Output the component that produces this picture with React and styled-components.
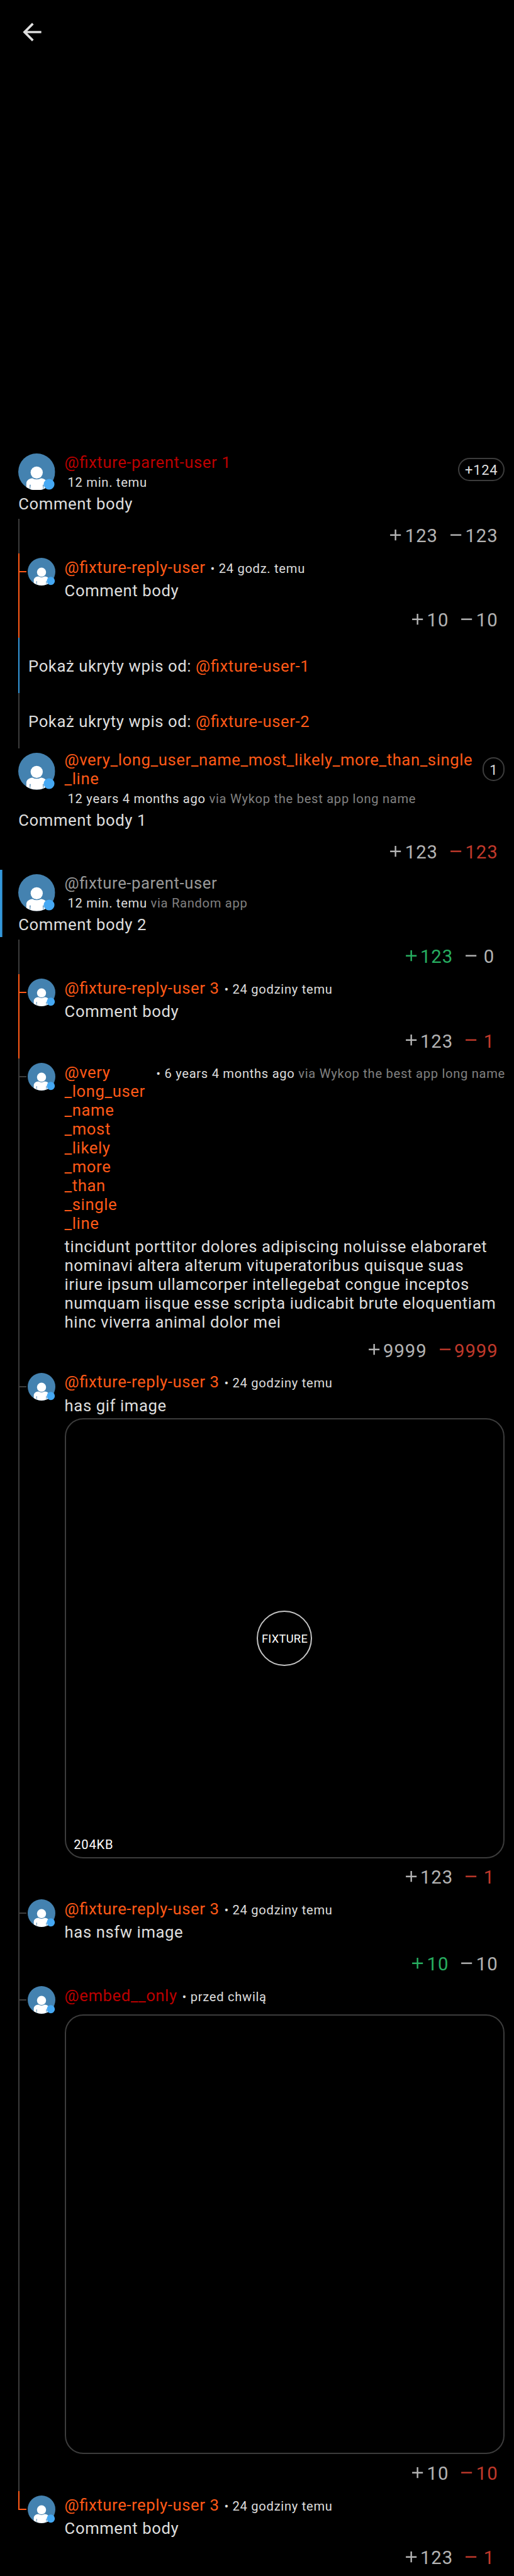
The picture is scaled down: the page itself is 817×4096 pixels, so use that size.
import React from "react";
import styled, { createGlobalStyle } from "styled-components";

const u = (n) => `${((n * 817) / 1560).toFixed(3)}px`;

const color = {
  text: "#dedede",
  dim: "#808080",
  vote: "#b3b3b3",
  line: "#3c3c3c",
  orange: "#ff5917",
  red: "#bb0000",
  gray: "#999999",
  blue: "#3498db",
  plus: "#27ae60",
  minus: "#c0392b",
};

const GlobalStyle = createGlobalStyle`
  html, body { margin: 0; background: #000; }
  body { overflow: hidden; }
`;

const Screen = styled.main`
  width: 817px;
  height: 4096px;
  overflow: hidden;
  background: #000;
  color: ${color.text};
  font-family: Roboto, "Liberation Sans", sans-serif;
  font-size: ${u(49)};
  line-height: ${u(57.2)};
  letter-spacing: 0.0231em;
  font-feature-settings: "liga" 1;
`;

const Toolbar = styled.header`
  height: ${u(1362)};
  box-sizing: border-box;
  padding: ${u(56)};
`;

const BackIcon = styled.svg`
  display: block;
  width: ${u(84)};
  height: ${u(84)};
  fill: ${color.text};
`;

const AvatarSvg = styled.svg`
  display: block;
  flex: none;
  width: ${(p) => u(p.$size)};
  height: ${(p) => u(p.$size)};
  margin: ${u(14)} ${u(28)} 0 ${(p) => u(p.$inset)};
`;

const Name = styled.div`
  color: ${(p) => p.$color};
  white-space: nowrap;
  min-width: 0;
`;

const NameLine = styled.div``;

const Time = styled.div`
  flex: none;
  font-size: ${u(38.5)};
  line-height: ${u(48)};
  letter-spacing: 0.0347em;
  white-space: pre;
  margin: ${(p) => u(p.$gap || 0)} ${u(-1.3)} 0 ${(p) => u(p.$inset)};
`;

const Via = styled.span`
  color: ${color.dim};
`;

const Parent = styled.section`
  box-sizing: border-box;
  box-shadow: ${(p) => (p.$marked ? `inset ${u(7)} 0 ${color.blue}` : "none")};
  height: ${(p) => u(p.$tall ? 256 : 206)};
  margin-bottom: ${u(7)};
  padding: 0 ${u(28)} 0 ${u(56)};
`;

const ParentHeader = styled.div`
  display: flex;
  align-items: flex-start;
  height: ${(p) => u(p.$tall ? 191.1 : 141.1)};
`;

const ParentMeta = styled.div`
  flex: 1;
  padding-top: ${(p) => u(p.$tall ? 8.4 : 15.1)};
`;

const Badge = styled.div`
  flex: none;
  box-sizing: border-box;
  width: ${(p) => u(p.$wide ? 142 : 67)};
  height: ${u(71)};
  margin-top: ${u(28)};
  padding-top: ${u(2.4)};
  border: ${u(4)} solid ${color.line};
  border-radius: ${u(36)};
  font-size: ${u(42)};
  letter-spacing: 0.033em;
  line-height: ${u(63)};
  text-align: center;
`;

const Row = styled.div`
  display: flex;
  align-items: flex-start;
  padding-left: ${u(56)};
  height: ${(p) => u(p.$height)};
`;

const Rail = styled.div`
  flex: none;
  width: ${u(4)};
  align-self: ${(p) => (p.$last ? "flex-start" : "stretch")};
  height: ${(p) => (p.$last ? u(58) : "auto")};
  background: ${(p) => p.$color};
`;

const Tick = styled.div`
  flex: none;
  width: ${u(20)};
  height: ${u(4)};
  margin-top: ${u(54)};
  background: ${(p) => p.$color};
`;

const Content = styled.div`
  flex: 1;
  min-width: 0;
  padding: ${u(15.2)} ${u(28)} 0 0;
`;

const ReplyHeader = styled.div`
  display: flex;
  align-items: baseline;
  margin-bottom: ${u(13.9)};
`;

const LongName = styled(Name)`
  flex: 1;
`;

const Body = styled.div`
  white-space: nowrap;
`;

const Hidden = styled.div`
  padding-left: ${u(26)};
  line-height: ${u(175)};
`;

const Mention = styled.span`
  color: ${color.orange};
`;

const Votes = styled.div`
  flex: 1;
  display: flex;
  justify-content: flex-end;
  align-items: center;
  gap: ${u(27)};
  height: ${u(105)};
  margin-top: ${(p) => u(p.$gap)};
  padding-right: ${(p) => u(p.$right)};
`;

const VoteButton = styled.div`
  display: flex;
  align-items: center;
  color: ${(p) => p.$color};
  font-size: ${u(56)};
  letter-spacing: 0.03125em;
`;

const VoteIcon = styled.svg`
  width: ${u(56)};
  height: ${u(56)};
  margin-bottom: ${u(10)};
  fill: currentColor;
`;

const VoteCount = styled.span`
  min-width: ${u(53.6)};
  text-align: center;
`;

const Media = styled.div`
  box-sizing: border-box;
  display: grid;
  grid-template-rows: 1fr auto 1fr;
  height: ${u(1336)};
  margin-top: ${(p) => u(p.$gap)};
  border: 2px solid ${color.line};
  border-radius: ${u(56)};
  color: #fff;
`;

const Play = styled.div`
  grid-row: 2;
  justify-self: center;
  box-sizing: border-box;
  width: ${u(168)};
  height: ${u(168)};
  border: ${u(4)} solid #c4c4c4;
  border-radius: 50%;
  font-size: ${u(35)};
  line-height: ${u(164)};
  letter-spacing: 0.0148em;
  text-align: center;
`;

const Size = styled.div`
  grid-row: 3;
  align-self: end;
  padding: 0 0 ${u(11.5)} ${u(24)};
  font-size: ${u(38.5)};
  letter-spacing: 0.04em;
  line-height: ${u(48)};
`;

function Avatar({ size, inset = 0, id }) {
  return (
    <AvatarSvg viewBox="0 0 112 112" $size={size} $inset={inset}>
      <clipPath id={id}>
        <circle cx="56" cy="56" r="56" />
      </clipPath>
      <g clipPath={`url(#${id})`}>
        <rect width="112" height="112" fill="#4482b0" />
        <path
          d="M24.6 112V91C24.6 82 34 75.500 43 75.300Q49.500 79 56 79T69 75.300C78 75.500 87.400 82 87.400 91V112Z"
          fill="#fff"
        />
        <path d="M34.700 95h3l-1.400 14h-1.200zM74.300 95h3l-.4 14h-1.200z" fill="#4482b0" />
        <circle cx="56" cy="58" r="18.500" fill="#fff" />
      </g>
      <circle cx="93.600" cy="93.600" r="16.400" fill="#45a8f3" />
    </AvatarSvg>
  );
}

function VoteBar({ plus, minus, up, down, gap = 1.5, right = 48.6 }) {
  return (
    <Votes $gap={gap} $right={right}>
      <VoteButton $color={up ? color.plus : color.vote}>
        <VoteIcon viewBox="0 0 24 24">
          <path d="M19 13h-6v6h-2v-6H5v-2h6V5h2v6h6v2z" />
        </VoteIcon>
        <VoteCount>{plus}</VoteCount>
      </VoteButton>
      <VoteButton $color={down ? color.minus : color.vote}>
        <VoteIcon viewBox="0 0 24 24">
          <path d="M19 13H5v-2h14v2z" />
        </VoteIcon>
        <VoteCount>{minus}</VoteCount>
      </VoteButton>
    </Votes>
  );
}

function ParentComment({ id, name, nameColor, time, via, body, badge, marked }) {
  const tall = name.length > 1;
  return (
    <Parent $marked={marked} $tall={tall}>
      <ParentHeader $tall={tall}>
        <Avatar size={112} id={id} />
        <ParentMeta $tall={tall}>
          <Name $color={nameColor}>
            {name.map((line) => (
              <NameLine key={line}>{line}</NameLine>
            ))}
          </Name>
          <Time $inset={9.5} $gap={7.2}>
            {time}
            {via && <Via> via {via}</Via>}
          </Time>
        </ParentMeta>
        {badge && <Badge $wide={badge.length > 1}>{badge}</Badge>}
      </ParentHeader>
      <Body>{body}</Body>
    </Parent>
  );
}

function ParentVotes({ rail, ...votes }) {
  return (
    <Row $height={105}>
      <Rail $color={rail ? color.line : "transparent"} />
      <VoteBar {...votes} />
    </Row>
  );
}

function Reply({
  id,
  name,
  nameColor = color.orange,
  time,
  via,
  body = [],
  height,
  rail = color.line,
  last,
  media,
  mediaGap,
  voteGap = 9.4,
  votes,
}) {
  const NameBox = name.length > 1 ? LongName : Name;
  return (
    <Row $height={height}>
      <Rail $color={rail} $last={last} />
      <Tick $color={rail} />
      <Avatar size={84} inset={4} id={id} />
      <Content>
        <ReplyHeader>
          <NameBox $color={nameColor}>
            {name.map((line) => (
              <NameLine key={line}>{line}</NameLine>
            ))}
          </NameBox>
          <Time $inset={15}>
            • {time}
            {via && <Via> via {via}</Via>}
          </Time>
        </ReplyHeader>
        {body.map((line) => (
          <Body key={line}>{line}</Body>
        ))}
        {media && (
          <Media $gap={mediaGap}>
            {media.label && <Play>{media.label}</Play>}
            {media.size && <Size>{media.size}</Size>}
          </Media>
        )}
        <VoteBar {...votes} gap={voteGap} right={20.6} />
      </Content>
    </Row>
  );
}

function HiddenReply({ user, rail }) {
  return (
    <Row $height={168.25}>
      <Rail $color={rail} />
      <Hidden>
        Pokaż ukryty wpis od: <Mention>{user}</Mention>
      </Hidden>
    </Row>
  );
}

export default function App() {
  return (
    <Screen>
      <GlobalStyle />
      <Toolbar>
        <BackIcon viewBox="0 0 24 24">
          <path d="M20 11H7.830l5.590-5.590L12 4l-8 8 8 8 1.410-1.410L7.830 13H20v-2z" />
        </BackIcon>
      </Toolbar>

      <ParentComment id="p1" name={["@fixture-parent-user 1"]} nameColor={color.red} time="12 min. temu" body="Comment body" badge="+124" />
      <ParentVotes rail plus="123" minus="123" />
      <Reply
        id="r1"
        name={["@fixture-reply-user"]}
        time="24 godz. temu"
        body={["Comment body"]}
        rail={color.orange}
        height={255.5}
        votes={{ plus: "10", minus: "10" }}
      />
      <HiddenReply user="@fixture-user-1" rail={color.blue} />
      <HiddenReply user="@fixture-user-2" rail={color.line} />

      <ParentComment
        id="p2"
        name={["@very_long_user_name_most_likely_more_than_single", "_line"]}
        nameColor={color.orange}
        time="12 years 4 months ago"
        via="Wykop the best app long name"
        body="Comment body 1"
        badge="1"
      />
      <ParentVotes plus="123" minus="123" down />

      <ParentComment id="p3" name={["@fixture-parent-user"]} nameColor={color.gray} time="12 min. temu" via="Random app" body="Comment body 2" marked />
      <ParentVotes rail plus="123" minus="0" up />
      <Reply
        id="r2"
        name={["@fixture-reply-user 3"]}
        time="24 godziny temu"
        body={["Comment body"]}
        rail={color.orange}
        height={256}
        votes={{ plus: "123", minus: "1", down: true }}
      />
      <Reply
        id="r3"
        name={["@very", "_long_user", "_name", "_most", "_likely", "_more", "_than", "_single", "_line"]}
        time="6 years 4 months ago"
        via="Wykop the best app long name"
        body={[
          "tincidunt porttitor dolores adipiscing noluisse elaboraret",
          "nominavi altera alterum vituperatoribus quisque suas",
          "iriure ipsum ullamcorper intellegebat congue inceptos",
          "numquam iisque esse scripta iudicabit brute eloquentiam",
          "hinc viverra animal dolor mei",
        ]}
        voteGap={6.5}
        height={940}
        votes={{ plus: "9999", minus: "9999", down: true }}
      />
      <Reply
        id="r4"
        name={["@fixture-reply-user 3"]}
        time="24 godziny temu"
        body={["has gif image"]}
        media={{ label: "FIXTURE", size: "204KB" }}
        mediaGap={8.5}
        voteGap={7.7}
        height={1598.5}
        votes={{ plus: "123", minus: "1", down: true }}
      />
      <Reply
        id="r5"
        name={["@fixture-reply-user 3"]}
        time="24 godziny temu"
        body={["has nsfw image"]}
        voteGap={16.5}
        height={263.5}
        votes={{ plus: "10", minus: "10", up: true }}
      />
      <Reply
        id="r6"
        name={["@embed__only"]}
        nameColor={color.red}
        time="przed chwilą"
        media={{}}
        mediaGap={27.3}
        voteGap={8}
        height={1547}
        votes={{ plus: "10", minus: "10", down: true }}
      />
      <Reply
        id="r7"
        name={["@fixture-reply-user 3"]}
        time="24 godziny temu"
        body={["Comment body"]}
        rail={color.orange}
        last
        height={256}
        votes={{ plus: "123", minus: "1", down: true }}
      />
    </Screen>
  );
}
